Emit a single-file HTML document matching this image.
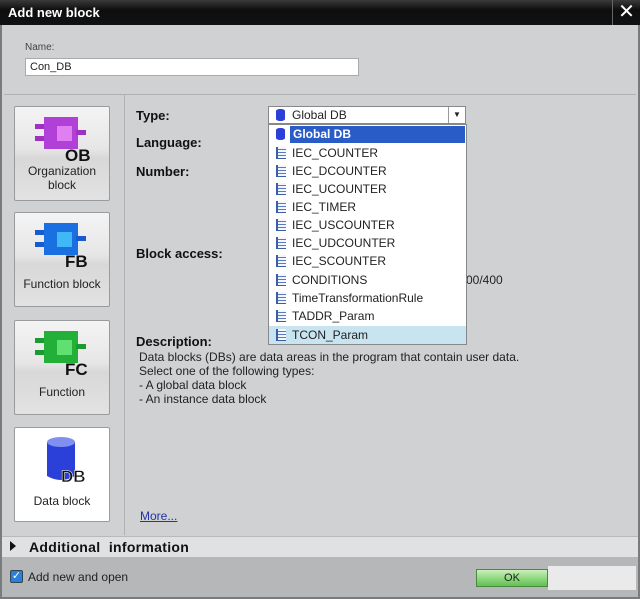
<!DOCTYPE html>
<html><head><style>
*{margin:0;padding:0;box-sizing:border-box}
body{width:640px;height:599px;background:#fff;font-family:"Liberation Sans","DejaVu Sans",sans-serif;font-size:12px;color:#222;position:relative;overflow:hidden}
.abs{position:absolute}
.tile{position:absolute;left:14px;width:96px;height:95px;border:1px solid #9a9b9d;border-radius:2px;background:linear-gradient(#f4f4f4,#e6e6e6 45%,#d8d8d8 55%,#e2e2e2);text-align:center;font-size:12px;color:#222}
.lbl{position:absolute;left:0;right:0;line-height:14px}
.b{font-weight:bold;font-size:13px;color:#111}
.item{position:absolute;left:272px;width:193px;height:18px;line-height:18px;font-size:12px;color:#222}
.item i{position:absolute;left:4px;top:3px;width:10px;height:12px;border-left:2px solid #3a5ea8;border-bottom:1px solid #3a5ea8;background:repeating-linear-gradient(#f4f6ff 0 2px,#5a7ac0 2px 3px)}
.item span{position:absolute;left:20px}
</style></head><body>
<div class="abs" style="left:0;top:0;width:640px;height:599px;background:#d0d1d3;border:2px solid #7a7b7d"></div>
<div class="abs" style="left:0;top:0;width:640px;height:25px;background:linear-gradient(#3a3a3a,#0e0e0e 40%,#111);"></div>
<div class="abs" style="left:8px;top:5px;color:#fff;font-weight:bold;font-size:13px">Add new block</div>
<div class="abs" style="left:612px;top:0;width:28px;height:25px;border-left:1px solid #666;color:#fff;font-size:20px;text-align:center;line-height:25px">✕</div>
<div class="abs" style="left:25px;top:42px;font-size:10px;color:#444">Name:</div>
<div class="abs" style="left:25px;top:58px;width:334px;height:18px;background:#fff;border:1px solid #aaa;padding-left:4px;line-height:16px;font-size:11px">Con_DB</div>
<div class="abs" style="left:4px;top:94px;width:632px;height:1px;background:#b0b1b3"></div>
<div class="abs" style="left:124px;top:95px;width:1px;height:440px;background:#b0b1b3"></div>

<div class="tile" style="top:106px">
<svg class="abs" style="left:20px;top:10px" width="58" height="46"><rect x="0" y="7" width="12" height="5" fill="#a030c0"/><rect x="0" y="19" width="12" height="5" fill="#a030c0"/><rect x="9" y="0" width="34" height="32" fill="#b040d8"/><rect x="22" y="9" width="15" height="15" fill="#e080f0"/><rect x="41" y="13" width="10" height="5" fill="#a030c0"/><text x="30" y="44" font-family="Liberation Sans" font-weight="bold" font-size="17" fill="#111">OB</text></svg>
<div class="lbl" style="top:57px">Organization<br>block</div></div>
<div class="tile" style="top:212px">
<svg class="abs" style="left:20px;top:10px" width="58" height="46"><rect x="0" y="7" width="12" height="5" fill="#1a5ad0"/><rect x="0" y="19" width="12" height="5" fill="#1a5ad0"/><rect x="9" y="0" width="34" height="32" fill="#1a70e0"/><rect x="22" y="9" width="15" height="15" fill="#40b8f8"/><rect x="41" y="13" width="10" height="5" fill="#1a5ad0"/><text x="30" y="44" font-family="Liberation Sans" font-weight="bold" font-size="17" fill="#111">FB</text></svg>
<div class="lbl" style="top:64px">Function block</div></div>
<div class="tile" style="top:320px">
<svg class="abs" style="left:20px;top:10px" width="58" height="46"><rect x="0" y="7" width="12" height="5" fill="#1a9a30"/><rect x="0" y="19" width="12" height="5" fill="#1a9a30"/><rect x="9" y="0" width="34" height="32" fill="#22b038"/><rect x="22" y="9" width="15" height="15" fill="#60e070"/><rect x="41" y="13" width="10" height="5" fill="#1a9a30"/><text x="30" y="44" font-family="Liberation Sans" font-weight="bold" font-size="17" fill="#111">FC</text></svg>
<div class="lbl" style="top:64px">Function</div></div>
<div class="tile" style="top:427px;background:#fff">
<svg class="abs" style="left:28px;top:8px" width="48" height="48"><path d="M4 6 Q18 -2 32 6 V40 Q18 48 4 40 Z" fill="#2a40d8"/><ellipse cx="18" cy="6" rx="14" ry="5" fill="#8090f0"/><text x="18" y="46" font-family="Liberation Sans" font-weight="bold" font-size="17" fill="#111" stroke="#fff" stroke-width="0.5">DB</text></svg>
<div class="lbl" style="top:66px">Data block</div></div>

<div class="abs b" style="left:136px;top:108px">Type:</div>
<div class="abs b" style="left:136px;top:135px">Language:</div>
<div class="abs b" style="left:136px;top:164px">Number:</div>
<div class="abs b" style="left:136px;top:246px">Block access:</div>
<div class="abs" style="left:466px;top:273px">00/400</div>
<div class="abs b" style="left:136px;top:334px">Description:</div>
<div class="abs" style="left:139px;top:350px;line-height:14px;color:#222">Data blocks (DBs) are data areas in the program that contain user data.<br>Select one of the following types:<br>- A global data block<br>- An instance data block</div>
<div class="abs" style="left:140px;top:509px;color:#2233aa;text-decoration:underline">More...</div>

<div class="abs" style="left:268px;top:106px;width:198px;height:18px;background:#fff;border:1px solid #888"></div>
<div class="abs" style="left:448px;top:107px;width:17px;height:16px;border-left:1px solid #999;font-size:8px;text-align:center;line-height:16px">▼</div>
<div class="abs" style="left:276px;top:109px;width:9px;height:12px;background:#2a40d8;border-radius:4px/2px"></div>
<div class="abs" style="left:292px;top:107px;line-height:16px">Global DB</div>
<div class="abs" style="left:268px;top:124px;width:199px;height:221px;background:#fff;border:1px solid #888"></div>
<div class="abs" style="left:290px;top:126px;width:175px;height:17px;background:#2a5cc8"></div>
<div class="abs" style="left:276px;top:128px;width:9px;height:12px;background:#2a40d8;border-radius:4px/2px"></div>
<div class="abs" style="left:293px;top:126px;line-height:17px;color:#fff;font-weight:bold">Global DB</div>
<div class="abs" style="left:269px;top:326px;width:197px;height:18px;background:#c8e4f0"></div>
<div class="item" style="top:144px"><i></i><span>IEC_COUNTER</span></div>
<div class="item" style="top:162px"><i></i><span>IEC_DCOUNTER</span></div>
<div class="item" style="top:180px"><i></i><span>IEC_UCOUNTER</span></div>
<div class="item" style="top:198px"><i></i><span>IEC_TIMER</span></div>
<div class="item" style="top:216px"><i></i><span>IEC_USCOUNTER</span></div>
<div class="item" style="top:234px"><i></i><span>IEC_UDCOUNTER</span></div>
<div class="item" style="top:252px"><i></i><span>IEC_SCOUNTER</span></div>
<div class="item" style="top:271px"><i></i><span>CONDITIONS</span></div>
<div class="item" style="top:289px"><i></i><span>TimeTransformationRule</span></div>
<div class="item" style="top:307px"><i></i><span>TADDR_Param</span></div>
<div class="item" style="top:326px"><i></i><span>TCON_Param</span></div>

<div class="abs" style="left:2px;top:536px;width:636px;height:21px;background:#e0e1e3;border-top:1px solid #b8b9bb"></div>
<div class="abs" style="left:10px;top:541px;width:0;height:0;border-left:6px solid #111;border-top:5px solid transparent;border-bottom:5px solid transparent"></div>
<div class="abs" style="left:29px;top:539px;font-weight:bold;font-size:14px;letter-spacing:0.3px;color:#111">Additional&nbsp; information</div>
<div class="abs" style="left:2px;top:557px;width:636px;height:40px;background:#b6b7b9"></div>
<div class="abs" style="left:10px;top:570px;width:13px;height:13px;background:#2a80d8;border:1px solid #345;border-radius:2px;color:#fff;font-size:11px;line-height:11px;text-align:center">✓</div>
<div class="abs" style="left:28px;top:570px">Add new and open</div>
<div class="abs" style="left:476px;top:569px;width:72px;height:18px;background:linear-gradient(#c8f0b8,#60c050);border:1px solid #4a8a40;text-align:center;line-height:16px;font-size:11px">OK</div>
<div class="abs" style="left:548px;top:566px;width:88px;height:24px;background:#eaeaea"></div>
</body></html>
